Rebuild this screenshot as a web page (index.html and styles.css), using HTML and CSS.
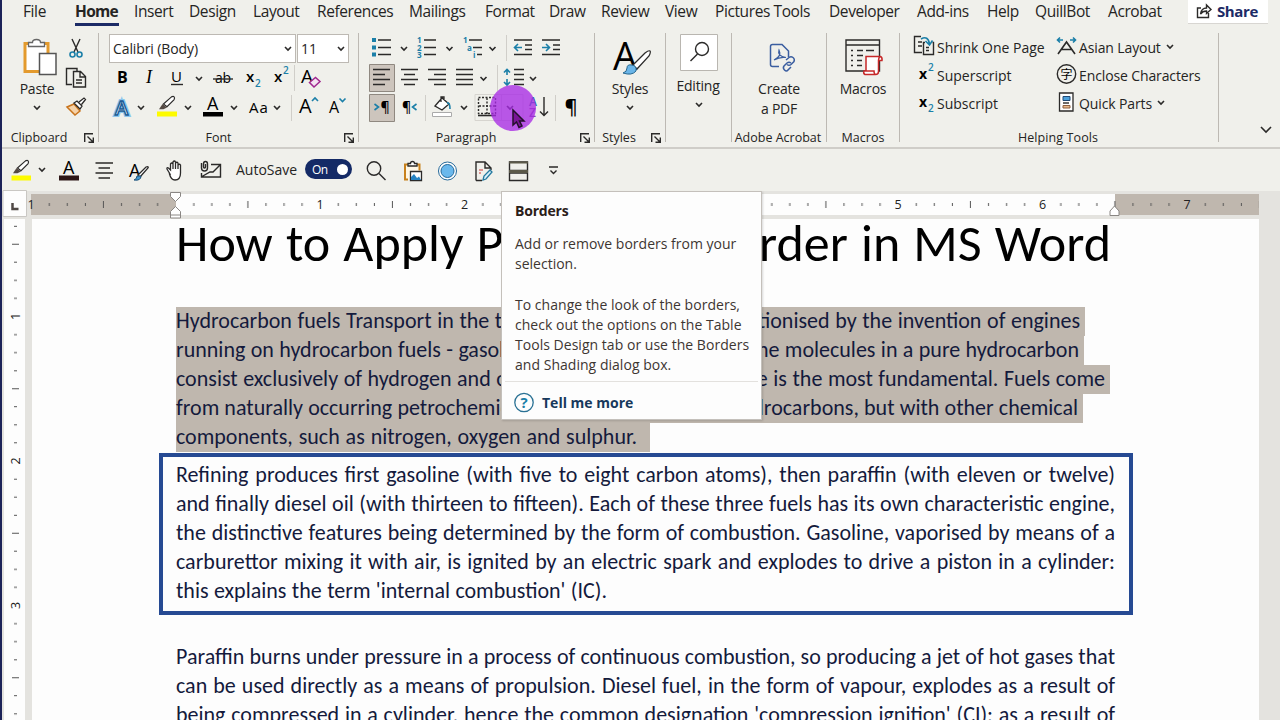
FILE: index.html
```html
<!DOCTYPE html>
<html lang="en">
<head>
    <meta charset="UTF-8">
    <meta name="viewport" content="width=device-width, initial-scale=1.0">
    <title>Word - Paragraph Border</title>
    <link rel="stylesheet" href="styles.css">
</head>
<body>
<svg class="defs" width="0" height="0">
    <symbol id="chev" viewBox="0 0 8 6" overflow="visible"><path d="M1 1l3 3 3-3" class="k2"/></symbol>
    <symbol id="launch" viewBox="0 0 10 10" overflow="visible"><path d="M.7 9V.7H9M3.5 3.5l5.5 5.5M9.3 4.5v4.8H4.5" class="k"/></symbol>
    <symbol id="pen" viewBox="0 0 20 18" overflow="visible"><path d="M6 9L15 1q2-1 3 0t0 3l-8 8z" class="paper"/><path d="M5 9l5 4-4 2H1z" fill="#554a44"/></symbol>
    <pattern id="hticks" x="175.7" y="194" width="144.5" height="21" patternUnits="userSpaceOnUse">
        <path d="M18.1 9v3M36.1 9v3M54.2 9v3M90.3 9v3M108.4 9v3M126.4 9v3M72.2 7v7" stroke="#555" stroke-width="1"/>
    </pattern>
    <pattern id="vticks" x="4" y="172" width="21" height="144.5" patternUnits="userSpaceOnUse">
        <path d="M10 18.1h3M10 36.1h3M10 54.2h3M10 90.3h3M10 108.4h3M10 126.4h3M8 72.2h7" stroke="#555" stroke-width="1"/>
    </pattern>
</svg>

<div class="app">
    <nav class="tabs">
        <span>File</span><span class="active">Home</span><span>Insert</span><span>Design</span><span>Layout</span><span>References</span><span>Mailings</span><span>Format</span><span>Draw</span><span>Review</span><span>View</span><span>Pictures Tools</span><span>Developer</span><span>Add-ins</span><span>Help</span><span>QuillBot</span><span>Acrobat</span>
        <button class="share">
            <svg width="16" height="16" viewBox="0 0 16 16"><path d="M5 5H1.500v9.500h11V10M4.500 11q1-6 6-6V2l4.500 4.500-4.500 4V8q-4 0-6 3z" class="k"/></svg>
            Share
        </button>
    </nav>

    <div class="ribbon">
        <section class="group clipboard">
            <div class="tools">
                <div class="big">
                    <svg width="50" height="46" viewBox="12 33 50 46"><path d="M25 43.500h23v28H25z" fill="#fff" stroke="#e39a2d" stroke-width="3"/><path d="M28.500 46.500v-4h4q0-3 4-3t4 3h4v4z" fill="#fff" stroke="#666" stroke-width="1.300"/><path d="M39.500 53.500h16.500v21H39.500z" fill="#fff" stroke="#555" stroke-width="1.500"/></svg>
                    <span class="cap">Paste</span>
                    <svg class="drop" width="8" height="6"><use href="#chev"/></svg>
                </div>
                <div class="stack">
                    <svg width="30" height="30" viewBox="62 33 30 30"><path d="M72 39l6 13M80 39l-6 13" class="k"/><circle cx="72.500" cy="54.500" r="2.500" class="b"/><circle cx="79.500" cy="54.500" r="2.500" class="b"/></svg>
                    <svg width="30" height="29" viewBox="62 63 30 29"><path d="M72 84.500h-5.500v-16H77V71" class="k"/><path d="M73.500 71.500h7l5 5v10.500h-12zM80 71.500v5.500h5.500M76 80h6M76 83h6" class="k"/></svg>
                    <svg width="30" height="30" viewBox="62 92 30 30"><path d="M67 107l7-3 6 7-5 4z" fill="#f6d2a8" stroke="#c8741d" stroke-width="1.500"/><path d="M74 103l3-2 5 5-2 3zM79 102l5-4 1.500 1.500-4 5" class="paper"/></svg>
                </div>
            </div>
            <footer><span>Clipboard</span><svg width="10" height="10"><use href="#launch"/></svg></footer>
        </section>

        <section class="group font">
            <div class="row combos">
                <div class="combo name">Calibri (Body)<svg width="8" height="6"><use href="#chev"/></svg></div>
                <div class="combo size">11<svg width="8" height="6"><use href="#chev"/></svg></div>
            </div>
            <div class="row">
                <svg width="28" height="29" viewBox="108 63 28 29"><text x="117" y="83" class="t16 bold">B</text></svg>
                <svg width="28" height="29" viewBox="136 63 28 29"><text x="146" y="83" class="t16 serif">I</text></svg>
                <svg width="46" height="29" viewBox="164 63 46 29"><text x="171" y="82" class="t15">U</text><path d="M171 84.500h12" class="k"/><use href="#chev" x="195" y="76" width="8" height="6"/></svg>
                <svg width="32" height="29" viewBox="210 63 32 29"><text x="215" y="83" class="t14">ab</text><path d="M213 79h20" class="k"/></svg>
                <svg width="28" height="29" viewBox="242 63 28 29"><text x="246" y="82" class="t15 semi">x</text><text x="255" y="87" class="t9 blue">2</text></svg>
                <svg width="26" height="29" viewBox="270 63 26 29"><text x="274" y="82" class="t15 semi">x</text><text x="283" y="74" class="t9 blue">2</text><path d="M294.500 65v26" class="sep"/></svg>
                <svg width="30" height="29" viewBox="296 63 30 29"><text x="301" y="83" class="t18">A</text><path d="M309.500 82.500l6-5 4.500 4-6 5.500z" fill="#f4e4f2" stroke="#a0288f" stroke-width="1.500"/></svg>
            </div>
            <div class="row">
                <svg width="42" height="30" viewBox="108 92 42 30"><text x="115" y="115" class="t20 glow">A</text><text x="115" y="115" class="t20 effect">A</text><use href="#chev" x="137" y="105" width="8" height="6"/></svg>
                <svg width="48" height="30" viewBox="150 92 48 30"><use href="#pen" x="158" y="96" width="18" height="16"/><path d="M157 111.500h20v5h-20z" fill="#fdfb00"/><use href="#chev" x="184" y="105" width="8" height="6"/></svg>
                <svg width="46" height="30" viewBox="198 92 46 30"><text x="207" y="110" class="t17">A</text><path d="M203 112h20v4.500h-20z"/><use href="#chev" x="230" y="105" width="8" height="6"/></svg>
                <svg width="52" height="30" viewBox="244 92 52 30"><text x="249" y="113" class="t15 wide">Aa</text><use href="#chev" x="273" y="105" width="8" height="6"/><path d="M291.500 95v26" class="sep"/></svg>
                <svg width="32" height="30" viewBox="296 92 32 30"><text x="299" y="113" class="t19">A</text><path d="M312 101l3-3 3 3" class="b"/></svg>
                <svg width="24" height="30" viewBox="328 92 24 30"><text x="329" y="113" class="t16">A</text><path d="M339.500 98.500l3 3 3-3" class="b"/></svg>
            </div>
            <footer><span>Font</span><svg width="10" height="10"><use href="#launch"/></svg></footer>
        </section>

        <section class="group para">
            <div class="row">
                <svg width="46" height="30" viewBox="366 33 46 30"><path d="M378 40h13M378 47.500h13M378 54.500h13" class="k"/><path d="M372 38h4v4h-4zM372 45.500h4v4h-4zM372 52.500h4v4h-4z" fill="#1b7fa8"/><use href="#chev" x="400" y="46" width="8" height="6"/></svg>
                <svg width="46" height="30" viewBox="412 33 46 30"><path d="M424 40h12M424 47.500h12M424 54.500h12" class="k"/><g class="t7 blue"><text x="417" y="43">1</text><text x="417" y="50.500">2</text><text x="417" y="58">3</text></g><use href="#chev" x="445.500" y="46" width="8" height="6"/></svg>
                <svg width="50" height="30" viewBox="458 33 50 30"><path d="M469 40h13M473 47.500h9M477 54.500h5" class="k"/><g class="t7 blue"><text x="463" y="43">1</text><text x="467" y="50.500">a</text><text x="473" y="58">i</text></g><use href="#chev" x="488.500" y="46" width="8" height="6"/><path d="M506.500 35v26" class="sep"/></svg>
                <svg width="29" height="30" viewBox="508 33 29 30"><path d="M514 40h18M525 45h7M525 49.500h7M514 54.500h18" class="k"/><path d="M522 47.500h-7M518 44l-3.500 3.500L518 51" class="b"/></svg>
                <svg width="28" height="30" viewBox="537 33 28 30"><path d="M542 40h18M553 45h7M553 49.500h7M542 54.500h18" class="k"/><path d="M542 47.500h7M546 44l3.500 3.500L546 51" class="b"/></svg>
            </div>
            <div class="row">
                <svg width="30" height="29" viewBox="366 63 30 29"><path d="M369.500 64.500h25v27h-25z" class="pressed"/><path d="M373 69.500h17M373 74.500h12M373 79.500h17M373 84.500h12" class="k"/></svg>
                <svg width="28" height="29" viewBox="396 63 28 29"><path d="M401 69.500h17M404 74.500h11M401 79.500h17M404 84.500h11" class="k"/></svg>
                <svg width="28" height="29" viewBox="424 63 28 29"><path d="M428 69.500h18M434 74.500h12M428 79.500h18M434 84.500h12" class="k"/></svg>
                <svg width="48" height="29" viewBox="452 63 48 29"><path d="M456 69.500h17M456 74.500h17M456 79.500h17M456 84.500h17" class="k"/><use href="#chev" x="479.500" y="76" width="8" height="6"/><path d="M497.500 65v26" class="sep"/></svg>
                <svg width="44" height="29" viewBox="500 63 44 29"><path d="M514 69.500h10M514 74.500h10M514 79.500h10M514 84.500h10" class="k"/><path d="M507 75v-5.500M504 72.500l3-3 3 3M507 79v6M504 82l3 3 3-3" class="b"/><use href="#chev" x="529" y="76" width="8" height="6"/></svg>
            </div>
            <div class="row">
                <svg width="30" height="30" viewBox="366 92 30 30"><path d="M369.500 94.500h25v27h-25z" class="pressed"/><path d="M374.500 104l4 3-4 3" class="b"/><text x="380.500" y="112" class="t14 semi">¶</text></svg>
                <svg width="31" height="30" viewBox="396 92 31 30"><text x="402" y="112" class="t14 semi">¶</text><path d="M416.500 104l-4 3 4 3" class="b"/><path d="M425.500 95v26" class="sep"/></svg>
                <svg width="45" height="30" viewBox="427 92 45 30"><path d="M435 106l7-8 7 6-7 6zM441 102v-5h3v4" class="paper"/><path d="M447 103q3-1 3 6" class="b"/><path d="M432.500 112.500h19v4h-19z" fill="#fff" stroke="#aaa"/><use href="#chev" x="460" y="105" width="8" height="6"/></svg>
                <svg width="53" height="30" viewBox="472 92 53 30"><path d="M475 94.500h48v26h-48zM501.500 94v26" class="hot"/><path d="M478.500 97.500h17v16h-17zM487 98v16M479 106h17" class="k dotted"/><path d="M478 115.500h18" class="k2"/><use href="#chev" x="506" y="105" width="8" height="6"/></svg>
                <svg width="33" height="30" viewBox="525 92 33 30"><text x="529" y="106" class="t11 semi blue">A</text><text x="529" y="117" class="t11 semi" fill="#8548a8">Z</text><path d="M544 97v18M540 111.500l4 4 4-4" class="k"/><path d="M555.500 95v26" class="sep"/></svg>
                <svg width="30" height="30" viewBox="558 92 30 30"><text x="564.500" y="114" class="t19 semi">¶</text></svg>
            </div>
            <footer><span>Paragraph</span><svg width="10" height="10"><use href="#launch"/></svg></footer>
        </section>

        <section class="group styles">
            <div class="big">
                <svg width="50" height="46" viewBox="604 33 50 46"><text x="612" y="70" class="t34">A</text><path d="M632 65l12-12q4-3 5-2t-1 5l-12 13z" class="paper"/><path d="M622 73q4-1 4-5t5-3q5 1 4 6-4 5-13 2z" fill="#6ab5e8" stroke="#27678f"/></svg>
                <span class="cap">Styles</span>
                <svg class="drop" width="8" height="6"><use href="#chev"/></svg>
            </div>
            <footer><span>Styles</span><svg width="10" height="10"><use href="#launch"/></svg></footer>
        </section>

        <section class="group editing">
            <div class="big">
                <svg width="50" height="43" viewBox="674 33 50 43"><path d="M680.500 34.500h37v36h-37z" fill="#fff" stroke="#b9b6b0"/><circle cx="702" cy="49" r="6.500" class="k"/><path d="M697.500 54l-7 7" class="k"/></svg>
                <span class="cap">Editing</span>
                <svg class="drop" width="8" height="6"><use href="#chev"/></svg>
            </div>
        </section>

        <section class="group acrobat">
            <div class="big">
                <svg width="50" height="46" viewBox="754 33 50 46"><g fill="none" stroke="#3b5ea0" stroke-width="1.500"><path d="M779 66.500h-6.500q-2 0-2-2v-18q0-2 2-2H782l6.500 6.500v6"/><path d="M774 60q8-4 5-10-2 6 7 7.500-6-1-12 2.500" stroke-width="1.200"/><path d="M786 60l3-2.500q2-1.500 4 0t1 4l-3 3q-2 1.500-4 0M791 63q-2-1.500-4 0l-3 3q-1.500 2 .5 4t3.500 0l3-3"/></g></svg>
                <span class="cap">Create</span>
                <span class="cap">a PDF</span>
            </div>
            <footer><span>Adobe Acrobat</span></footer>
        </section>

        <section class="group macros">
            <div class="big">
                <svg width="50" height="46" viewBox="838 33 50 46"><path d="M846 40h33.500v31H846zM846 45h33.500" class="k"/><path d="M851 50.500h2M857 50.500h6M866 50.500h8M851 55.500h2M857 55.500h6M851 60.500h2M857 60.500h5M851 65.500h2M857 65.500h5" class="k"/><path d="M866 71V56.500h14.500q2 1 1.500 4h-3.500v11q0 3-3 3H865q-2-1-1-3.500h10q0 3 1.500 3.500M880 56.500q-1.500 1-1.500 4" fill="#fff" stroke="#c62828" stroke-width="1.500"/></svg>
                <span class="cap">Macros</span>
            </div>
            <footer><span>Macros</span></footer>
        </section>

        <section class="group helping">
            <div class="cmds">
                <div class="cmd"><svg width="25" height="28" viewBox="911 33 25 28"><path d="M921 52.500h-7.500v-16H920M917 42h4M917 46h4M924 42.500h-1.500v12h10V42.500h-1M925 47.500h3M925 50.500h3" class="k"/><path d="M920 39q7-4 8.500 5M924.500 41l4 4 3-4.500" class="b"/></svg>Shrink One Page</div>
                <div class="cmd"><svg width="25" height="28" viewBox="911 61 25 28"><text x="918" y="79" class="t14 bold">x</text><text x="927" y="71" class="t9 blue">2</text></svg>Superscript</div>
                <div class="cmd"><svg width="25" height="28" viewBox="911 89 25 28"><text x="918" y="107" class="t14 bold">x</text><text x="927" y="112" class="t9 blue">2</text></svg>Subscript</div>
            </div>
            <div class="cmds right">
                <div class="cmd"><svg width="24" height="28" viewBox="1054 33 24 28"><path d="M1057 54l8.500-12 8.500 12M1060.500 49.500h10" class="k2"/><path d="M1062 40h-5.500M1059 37.500l-2.500 2.500 2.500 2.500M1069 40h5.500M1072 37.500l2.500 2.500-2.500 2.500" class="b"/></svg>Asian Layout<svg class="after" width="8" height="6"><use href="#chev"/></svg></div>
                <div class="cmd"><svg width="24" height="28" viewBox="1054 61 24 28"><circle cx="1065.500" cy="74" r="9.200" class="k"/><text x="1059.500" y="78.500" class="cjk">字</text></svg>Enclose Characters</div>
                <div class="cmd"><svg width="24" height="28" viewBox="1054 89 24 28"><path d="M1058.500 93h13.500v18h-13.500z" class="k paper"/><path d="M1062 96.500h7v4h-7z" fill="#4ba0dc" stroke="#204a75"/><path d="M1062 103h6" class="k"/><path d="M1062 105.500h7v2.500h-7z" fill="#e9b98c" stroke="#8d6040"/></svg>Quick Parts<svg class="after" width="8" height="6"><use href="#chev"/></svg></div>
            </div>
            <footer><span>Helping Tools</span></footer>
        </section>
        <svg class="collapse" width="12" height="8" viewBox="0 0 12 8"><path d="M1 1l5 5 5-5" class="k2"/></svg>
    </div>

    <div class="qat">
        <svg width="50" height="42" viewBox="4 149 50 42"><use href="#pen" x="12" y="160" width="18" height="16"/><path d="M11.500 175.500H31v5H11.500z" fill="#fdfb00"/><use href="#chev" x="38" y="167" width="8" height="6"/></svg>
        <svg width="34" height="42" viewBox="54 149 34 42"><text x="63" y="174" class="t17">A</text><path d="M59 175.500h20v5H59z" fill="#2c1616"/></svg>
        <svg width="36" height="42" viewBox="88 149 36 42"><path d="M95.500 163h17.500M98.500 168h11.500M95.500 173h17.500M98.500 178h11.500" class="k"/></svg>
        <svg width="36" height="42" viewBox="124 149 36 42"><text x="129" y="177" class="t17">A</text><path d="M138 175l8-8q3-1 2 1l-8 9z" class="paper"/><path d="M134 180q3-1 3-4h4q0 5-7 4z" fill="#4097d0" stroke="#1b5078"/></svg>
        <svg width="34" height="42" viewBox="160 149 34 42"><path d="M170 174l-3-5q-.5-2 1.500-1l2 2v-6q1.500-2 2.500 0v5-7q1.500-2 2.500 0v7-6q1.500-1.500 2.500 0v6-4q1.500-1.500 2.500 0v8q0 7-5.500 7-4 0-5.500-6z" class="paper"/></svg>
        <svg width="36" height="42" viewBox="194 149 36 42"><path d="M211 164.500h9.500v12.500h-19V173M202 176.500l8-4.500h3l7-7" class="k"/><path d="M201.500 163v5q0 3 3 3t3-3v-4q0-2.500-2-2.500t-2 2.500v3q0 1 1 1t1-1v-3" class="k"/></svg>
        <span class="autosave">AutoSave</span>
        <span class="toggle">On<i></i></span>
        <svg width="42" height="42" viewBox="353 149 42 42"><circle cx="374" cy="168.500" r="6.700" class="k"/><path d="M379 173.500l6.500 6.500" class="k"/></svg>
        <svg width="36" height="42" viewBox="395 149 36 42"><path d="M408 179.500h-3v-15h14.500v6" fill="#fff7e6" stroke="#c8811d" stroke-width="2"/><path d="M408 166v-2.500h2.500q0-2 2-2t2 2h2.500v2.500z" class="paper"/><path d="M410.500 171.500h11v9h-11z" class="paper"/><path d="M411 180v-3l3-3 3 4 2-1.500 2 3.500z" fill="#2683c3"/></svg>
        <svg width="36" height="42" viewBox="431 149 36 42"><circle cx="447.500" cy="171" r="9" fill="#fff" stroke="#24699a"/><circle cx="447.500" cy="171" r="6.500" fill="#6ab8ec" stroke="#24699a"/></svg>
        <svg width="36" height="42" viewBox="467 149 36 42"><path d="M476 180.500v-18.500h9l6 6v2M485 162v6h6M476 180.500h6" class="k"/><path d="M479 170h4M479 173h2" stroke="#c33"/><path d="M483 180l1-4 6-6 2 2-6 7z" fill="#d8effa" stroke="#24799f" stroke-width="1.300"/></svg>
        <svg width="34" height="42" viewBox="503 149 34 42"><path d="M509.500 162h18v18.500h-18zM509.500 170.500h18M509.500 173h18" class="k"/><path d="M509 161.500h19v2h-19zM509 170h19v3h-19z" fill="#5b5949"/></svg>
        <svg width="30" height="42" viewBox="537 149 30 42"><path d="M549 167h9M550.500 170.500l3 3 3-3" class="k"/></svg>
    </div>

    <svg class="hruler" width="1280" height="28" viewBox="0 191 1280 28">
        <path d="M3 190.500h23.500v26H3z" fill="#fdfdfd" stroke="#c9c7c3"/>
        <path d="M12.500 203v6h6" fill="none" stroke="#4f4845" stroke-width="2.500"/>
        <path d="M31 194h1228v21H31z" fill="#fdfdfd"/>
        <path d="M31 194h145v21H31zM1115 194h144v21h-144z" fill="#bfb7ae"/>
        <path d="M35 194h1224v21H35z" fill="url(#hticks)"/>
        <g class="num"><text x="31" y="209">1</text><text x="320" y="209">1</text><text x="464.500" y="209">2</text><text x="898" y="209">5</text><text x="1042.500" y="209">6</text><text x="1187" y="209">7</text></g>
        <path d="M170.500 192.500h10v4l-5 5-5-5zM175.500 206.500l5 5v6.500h-10v-6.500zM170.500 215h10M1114.500 206l4.500 5v4.500h-9V211z" fill="#fff" stroke="#8a8784"/>
    </svg>

    <main>
        <svg class="vruler" width="32" height="501" viewBox="0 219 32 501">
            <path d="M4 219h21v501H4z" fill="#fdfdfd"/>
            <path d="M4 219h21v501H4z" fill="url(#vticks)"/>
            <g class="num"><text transform="translate(20 316.500) rotate(-90)">1</text><text transform="translate(20 461) rotate(-90)">2</text><text transform="translate(20 605.500) rotate(-90)">3</text></g>
        </svg>
        <article class="page">
            <h1 class="line">How to Apply Paragraph Border in MS Word</h1>
            <div class="selected">
                <p class="line" style="width: 904px">Hydrocarbon fuels Transport in the twentieth century was revolutionised by the invention of engines</p>
                <p class="line" style="width: 903px">running on hydrocarbon fuels - gasoline, paraffin and diesel oil. The molecules in a pure hydrocarbon</p>
                <p class="line" style="width: 929px">consist exclusively of hydrogen and carbon, of which the methane is the most fundamental. Fuels come</p>
                <p class="line" style="width: 902px">from naturally occurring petrochemicals, they are not all pure hydrocarbons, but with other chemical</p>
                <p class="line" style="width: 461px">components, such as nitrogen, oxygen and sulphur.</p>
            </div>
            <div class="boxed">
                <p class="line">Refining produces first gasoline (with five to eight carbon atoms), then paraffin (with eleven or twelve)</p>
                <p class="line">and finally diesel oil (with thirteen to fifteen). Each of these three fuels has its own characteristic engine,</p>
                <p class="line">the distinctive features being determined by the form of combustion. Gasoline, vaporised by means of a</p>
                <p class="line">carburettor mixing it with air, is ignited by an electric spark and explodes to drive a piston in a cylinder:</p>
                <p class="line" style="width: 431px">this explains the term 'internal combustion' (IC).</p>
            </div>
            <div class="plain">
                <p class="line">Paraffin burns under pressure in a process of continuous combustion, so producing a jet of hot gases that</p>
                <p class="line">can be used directly as a means of propulsion. Diesel fuel, in the form of vapour, explodes as a result of</p>
                <p class="line">being compressed in a cylinder, hence the common designation 'compression ignition' (CI); as a result of</p>
            </div>
        </article>
    </main>

    <aside class="tooltip">
        <h2>Borders</h2>
        <p>Add or remove borders from your<br>selection.</p>
        <p>To change the look of the borders,<br>check out the options on the Table<br>Tools Design tab or use the Borders<br>and Shading dialog box.</p>
        <div class="more">
            <svg width="20" height="20" viewBox="0 0 20 20"><circle cx="10" cy="8.500" r="9.200" fill="none" stroke="#2a7194" stroke-width="1.300"/><text x="6.500" y="14" class="t15 blue">?</text></svg>
            Tell me more
        </div>
    </aside>

    <!-- click highlight with the mouse pointer -->
    <div class="spot"></div>
    <svg class="pointer" width="14" height="20" viewBox="0 0 14 20"><path d="M1 1v15l3.500-3 2.500 5.500 3-1.500-2.500-5H12z" fill="#7a1496" stroke="#24102c" stroke-width="1.500"/></svg>
</div>
</body>
</html>
```
FILE: styles.css
```css
* { box-sizing: border-box; }
body { margin: 0; background: #e4e3df; overflow: hidden; font-family: "Open Sans", "Noto Sans", sans-serif; color: #252423; }
h1, h2, p { margin: 0; font-weight: normal; }
svg { display: block; flex: none; overflow: visible; }
.defs { position: absolute; }
.app { position: relative; width: 1280px; height: 720px; overflow: hidden; border-left: 2px solid #1c2358; }
.app > * { margin-left: -2px; }
.app > nav, .app > .ribbon, .app > .qat { margin-left: 0; }

/* icon strokes */
.k { fill: none; stroke: #2b2a29; stroke-width: 1.4; }
.k2 { fill: none; stroke: #2b2a29; stroke-width: 1.6; }
.b { fill: none; stroke: #1b7fa8; stroke-width: 1.6; }
.paper { fill: #fff; stroke: #2b2a29; stroke-width: 1.3; }
.sep { stroke: #d0cec9; }
.pressed { fill: #cdc5bd; stroke: #8f8880; }
.hot { fill: none; stroke: #d6d4cf; }
.dotted { stroke-dasharray: 2 1.5; }
.t7 { font-size: 8px; font-weight: 700; }
.t9 { font-size: 10px; font-weight: 600; }
.t11 { font-size: 12px; }
.t14 { font-size: 14px; }
.t15 { font-size: 15px; }
.t16 { font-size: 16px; }
.t17 { font-size: 18px; }
.t18 { font-size: 19px; }
.t19 { font-size: 20px; }
.t20 { font-size: 20px; }
.t34 { font-size: 38px; }
.semi { font-weight: 600; }
.bold { font-weight: 700; }
.wide { letter-spacing: 1px; }
.serif { font-family: "Liberation Serif", serif; font-style: italic; font-size: 18px; }
.blue { fill: #1b7fa8; }
.glow { font-weight: 600; fill: none; stroke: #8cc6ee; stroke-width: 4; }
.effect { font-weight: 600; fill: #eaf5fc; stroke: #1d5c94; stroke-width: 1.4; }
.cjk { font-family: "Noto Sans CJK JP", sans-serif; font-size: 12px; }

/* tabs */
.tabs {
    position: relative; height: 28px; padding-left: 21px; background: #f0f0eb;
    display: grid; grid-template-columns: 52px 59px 55px 64px 64px 92px 76px 64px 52px 64px 50px 114px 88px 70px 48px 73px 80px 80px;
    font-size: 15.5px; line-height: 22px; letter-spacing: -0.4px; white-space: nowrap;
}
.tabs .active { width: 44px; height: 26px; font-weight: 700; letter-spacing: -0.7px; border-bottom: 3px solid #1c2b66; }
.share {
    height: 24px; border: 0; border-bottom: 1px solid #d8d6d2; background: #fff; padding: 0 0 2px 8px;
    display: flex; align-items: center; gap: 5px; font: 700 15px/22px "Open Sans", sans-serif; letter-spacing: -0.4px; color: #1c2b66;
}

/* ribbon */
.ribbon { display: flex; height: 121px; padding: 5px 0 0 2px; background: #f0f0eb; border-bottom: 2px solid #cfcdc8; }
.group { position: relative; height: 109px; border-right: 1px solid #bdb9b3; font-size: 14px; letter-spacing: -0.2px; }
.group footer { position: absolute; left: 0; right: 0; top: 95px; height: 20px; line-height: 20px; text-align: center; font-size: 12.5px; letter-spacing: 0; }
.group footer svg { position: absolute; right: 4px; top: 5px; }
.row { display: flex; height: 30px; }
.row:nth-child(2) { height: 29px; }
.clipboard { width: 95px; }
.clipboard .tools { display: flex; padding-left: 8px; }
.clipboard footer { padding-right: 24px; }
.font { width: 260px; padding-left: 9px; }
.font footer { padding-right: 20px; }
.para { width: 236px; padding-left: 7px; }
.para footer { padding-right: 21px; }
.styles { width: 71px; }
.styles footer { padding-right: 22px; }
.editing { width: 66px; }
.editing .cap { padding-right: 1px; }
.acrobat { width: 95px; }
.acrobat footer { white-space: nowrap; right: 2px; }
.macros { width: 73px; }
.helping { width: 319px; display: flex; padding-left: 12px; letter-spacing: 0; }
.helping footer { right: 2px; letter-spacing: .1px; }
.big { display: flex; flex-direction: column; align-items: center; }
.cap { line-height: 20px; white-space: nowrap; }
.drop { margin-top: 6px; }
.combos { padding: 1px 0 0 1px; gap: 1px; }
.combo {
    height: 29px; padding: 0 3px; border: 1px solid #bdb9b3; background: #fff;
    display: flex; align-items: center; justify-content: space-between; font-size: 14px; letter-spacing: -0.1px;
}
.combo.name { width: 187px; }
.combo.size { width: 52px; }
.cmds { width: 143px; }
.cmds.right { letter-spacing: -0.12px; }
.cmd { height: 28px; display: flex; align-items: center; white-space: nowrap; }
.after { margin-left: 5px; }
.collapse { margin: 93px 0 0 41px; }

/* quick access bar */
.qat { display: flex; align-items: center; height: 42px; padding-left: 2px; background: #f0f0eb; font-size: 14px; }
.autosave { width: 74px; padding-left: 6px; padding-bottom: 2px; }
.toggle {
    width: 47px; height: 20px; margin: 0 1px 2px; padding: 0 4px 0 7px; border-radius: 10px; background: #142a66; color: #fff;
    display: flex; align-items: center; justify-content: space-between; font-size: 12px; letter-spacing: -0.5px;
}
.toggle i { width: 11px; height: 11px; border-radius: 50%; background: #fff; }

/* rulers */
.hruler .num text, .vruler .num text { font-size: 12.5px; text-anchor: middle; fill: #222; }
.hruler { background: #e4e3df; }
main { display: flex; }

/* document */
.page {
    width: 1227px; height: 501px; padding-left: 127px; overflow: hidden; background: #fdfdfd; color: #141a3c;
    font-family: Carlito, Lato, sans-serif; font-size: 22px; line-height: 27px;
}
.line { width: 939px; height: 29px; white-space: nowrap; text-align: justify; text-align-last: justify; }
h1.line { width: 935px; height: 88px; margin-left: 17px; font-size: 52px; line-height: 49px; color: #000; }
.selected { padding-left: 17px; }
.selected .line { box-sizing: content-box; padding-right: 5px; background: #bfb7ae; }
.selected .line:last-child { padding-right: 13px; }
.boxed { width: 974px; height: 162px; margin-top: 1px; padding: 4px 13px; border: 4px solid #264a93; }
.plain { padding: 28px 0 0 17px; }

/* tooltip */
.tooltip {
    position: absolute; left: 501px; top: 191px; width: 261px; height: 229px; padding: 9px 13px 0; background: #fdfdfd;
    border: 1px solid #c4c0bb; box-shadow: 1px 1px 2px rgba(0, 0, 0, .15); font-size: 14px; line-height: 20.2px; color: #3d3632; white-space: nowrap;
}
.tooltip h2 { margin-bottom: 13px; font-size: 14px; font-weight: 700; letter-spacing: -0.2px; color: #2b2019; }
.tooltip p + p { margin-top: 20px; letter-spacing: .03px; }
.more {
    display: flex; align-items: center; gap: 8px; margin: 6px -10px 0; padding: 11px 9px;
    border-top: 1px solid #e3e1de; font-weight: 700; color: #17395c;
}
.spot { position: absolute; left: 490px; top: 85px; width: 46px; height: 46px; border-radius: 50%; background: rgba(168, 42, 228, .78); }
.pointer { position: absolute; left: 512px; top: 109px; }
```
